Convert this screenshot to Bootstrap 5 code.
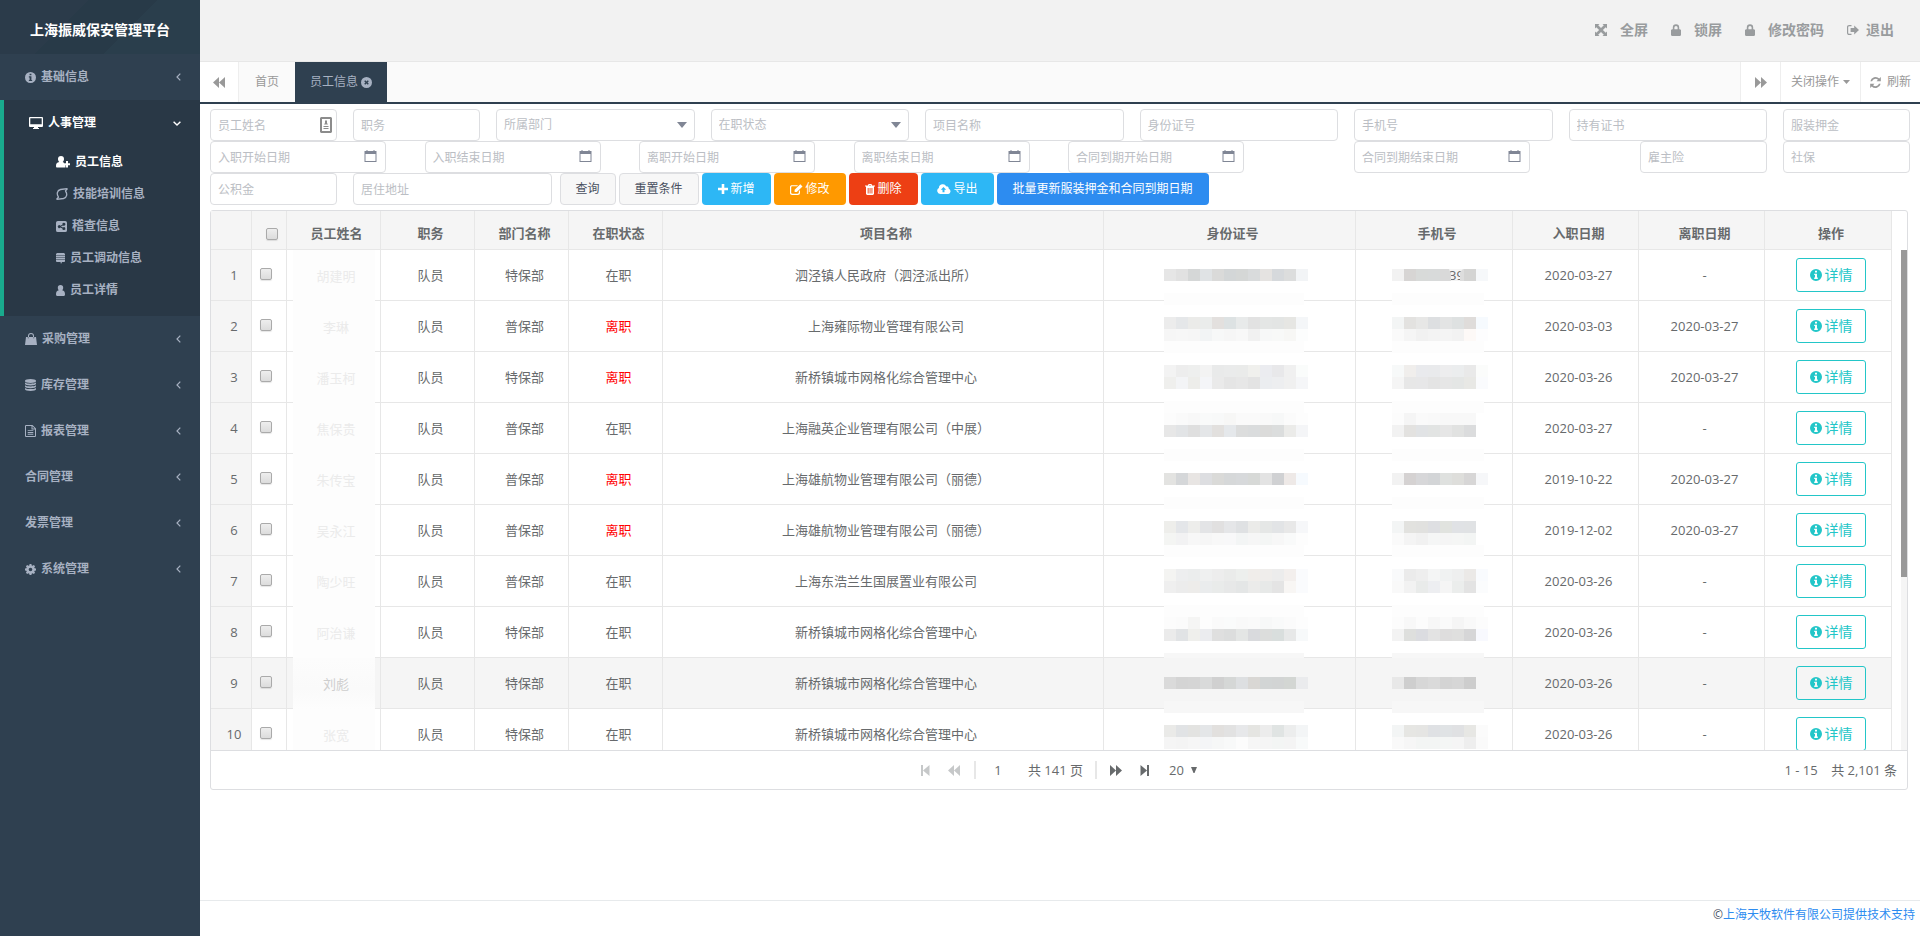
<!DOCTYPE html>
<html lang="zh-CN">
<head>
<meta charset="utf-8">
<meta name="viewport" content="width=device-width, initial-scale=1">
<title>上海振威保安管理平台</title>
<link href="https://cdn.jsdelivr.net/npm/bootstrap@5.3.0/dist/css/bootstrap.min.css" rel="stylesheet">
<style>
  body { font-family: "Open Sans", "Noto Sans CJK SC", sans-serif; font-size: 12px; line-height: 18px; color: #495060; background: #fff; }
  a { text-decoration: none; color: inherit; }
  svg { fill: currentColor; flex: none; }

  /* sidebar */
  .side { width: 200px; flex: none; background: #2f4050; color: #a7b1c2; font-weight: 600; }
  .brand { height: 54px; padding-top: 6px; font-size: 14px; color: #fff; background: linear-gradient(135deg, #2b3b4a 0 35%, #283a48 35% 62%, #2a3e4c 62%); }
  .side-link { height: 46px; padding: 0 19px 0 25px; }
  .side-link svg.ico { margin-right: 5px; }
  .side-open { background: #293846; border-left: 4px solid #19aa8d; padding-bottom: 10px; }
  .side-open .side-link { color: #fff; }
  .sub-link { height: 32px; padding-left: 52px; }
  .sub-link svg { margin-right: 5px; }
  .sub-link.on { color: #fff; }

  /* top bar and tabs */
  .topbar { height: 61px; background: #f2f2f2; color: #999c9e; font-size: 14px; font-weight: 600; padding: 0 26px 1px 0; gap: 23px; }
  .topbar svg { margin-right: 13px; }
  .topbar a:last-child svg { margin-right: 7px; }
  .tabs { height: 43px; background: #fafafa; border-top: 1px solid #e7e7e7; border-bottom: 2px solid #2f4050; color: #999; }
  .tab-btn { background: #fff; border: 0; color: #999; height: 40px; width: 40px; }
  .tab-btn.r { border-right: 1px solid #eee; width: 39px; }
  .tab-btn.l { border-left: 1px solid #eee; }
  .tab-page { height: 40px; padding: 0 16px; }
  .tab-page.on { background: #2f4050; color: #a7b1c2; padding: 0 15px; gap: 3px; }

  /* search form: 24 columns */
  .filters { display: grid; grid-template-columns: repeat(24, minmax(0, 1fr)); padding: 5px 2px 0; }
  .cell { height: 32px; padding: 0 8px; }
  .w2 { grid-column: span 2; } .w3 { grid-column: span 3; } .w4 { grid-column: span 4; }
  .fld { height: 32px; border: 1px solid #dddee1; border-radius: 4px; padding: 2px 7px; font-size: 12px; line-height: 18px; color: #495060; width: 100%; background-color: #fff; display: block; }
  .fld::placeholder { color: #bbbec4; opacity: 1; }
  select.fld { appearance: none; color: #bbbec4; background: #fff url("data:image/svg+xml,%3Csvg xmlns='http://www.w3.org/2000/svg' width='10' height='6'%3E%3Cpath d='M0 0h10L5 6z' fill='%23808695'/%3E%3C/svg%3E") no-repeat right 7px top 12px; }
  .date { width: 176px; max-width: 100%; }
  .fld-ico { right: 9px; top: 9px; color: #808695; }
  .b { height: 32px; border-radius: 4px; font-size: 12px; line-height: 18px; padding: 0 15px; border: 1px solid transparent; color: #fff; display: inline-flex; align-items: center; justify-content: center; gap: 3px; white-space: nowrap; }
  .b-plain { background: #f7f7f7; border-color: #dddee1; color: #495060; }
  .b-sky { background: #2db7f5; } .b-orange { background: #f90; } .b-red { background: #ed3f14; } .b-blue { background: #2d8cf0; }

  /* data grid */
  .gridbox { margin: 5px 12px 0 10px; border: 1px solid #dddee1; border-radius: 3px; color: #676a6c; font-size: 13px; }
  .view { height: 539px; overflow: hidden; }
  .pane { min-width: 0; }
  .roster { table-layout: fixed; border-collapse: separate; border-spacing: 0; color: inherit; line-height: 20px; }
  .roster > :not(caption) > tr > * { padding: 0 0 0 6px; border: 0 solid #e7e7e7; border-width: 0 1px 1px 0; height: 51px; position: relative; box-shadow: none; color: #676a6c; white-space: nowrap; }
  .roster > thead > tr > th { height: 39px; background: #f5f5f5; font-weight: 600; padding-top: 5px; vertical-align: middle; }
  .roster > tbody > tr > td:first-child, .roster > tbody > tr.hov > td { background: #f5f5f5; }
  .roster > tbody > tr > td.ck { padding: 0 6px 6px 0; }
  .tick { appearance: none; width: 12px; height: 12px; border: 1px solid #aaa; border-radius: 2px; background: linear-gradient(#eee, #dcdcdc); margin: 0; vertical-align: middle; box-shadow: 0 1px 1px rgba(0,0,0,.1); }
  .smudge { position: absolute; left: 6px; right: 5px; top: 0; bottom: -1px; background: #fdfdfd; padding-left: 4px; color: #ebebeb; }
  .hov .smudge { background: linear-gradient(#fcfcfc, #fafafa 60%, #fdfdfd); color: #cecece; }
  .mosaic { position: absolute; left: 0; top: 0; overflow: visible; }
  .off { color: #f00; }
  .more { height: 34px; width: 70px; border: 1px solid #23c6c8; border-radius: 3px; color: #23c6c8; background: transparent; font-size: 14px; padding: 0; display: inline-flex; align-items: center; justify-content: center; gap: 3px; vertical-align: middle; }
  .rail { width: 6px; flex: none; margin: 39px 0 0 9px; background: #f5f5f5; }
  .thumb { background: #999; }
  .pager { height: 39px; border-top: 1px solid #dddee1; padding: 0 10px; line-height: 20px; }
  .pager button { border: 0; background: none; padding: 0; color: #676a6c; display: flex; }
  .pager button:disabled { color: #c6c8c9; }
  .pager .bar { width: 2px; height: 18px; background: #e7e7e7; }
  .pg-no { width: 36px; border: 0; padding: 0; text-align: center; color: #676a6c; }
  .pg-size { appearance: none; border: 0; background: none; padding: 0; color: #676a6c; width: 18px; }
  .foot { border-top: 1px solid #e7eaec; height: 36px; padding: 5px 5px 0 0; }
  .foot a { color: #2d8cf0; }
</style>
</head>
<body>
<svg class="d-none" xmlns="http://www.w3.org/2000/svg">
  <symbol id="i-info" viewBox="0 0 12 12"><path fill-rule="evenodd" d="M6 0a6 6 0 1 1 0 12A6 6 0 0 1 6 0zM5 1.8v1.7h2V1.8zM4.2 4.7v1.2H5v2.7h-.8v1.3h3.6V8.600H7V4.700z"/></symbol>
  <symbol id="i-desktop" viewBox="0 0 14 12"><path fill-rule="evenodd" d="M1 0h12a1 1 0 0 1 1 1v8a1 1 0 0 1-1 1H9v1h1v1H4v-1h1v-1H1a1 1 0 0 1-1-1V1a1 1 0 0 1 1-1zm.3 1.200v6h11.400v-6z"/></symbol>
  <symbol id="i-userplus" viewBox="0 0 14 12"><path d="M5 0a3 3 0 0 1 3 3c0 1.300-.6 2.500-1.300 3.100L8 6.800V9h1.500v2.500H1.200C.4 11.500 0 11 0 10c0-2.200.8-3.300 3.300-3.900C2.600 5.500 2 4.300 2 3a3 3 0 0 1 3-3zM10 5h2v2.200h2v2h-2v2.300h-2V9.200H8v-2h2z"/></symbol>
  <symbol id="i-train" viewBox="0 0 12 12"><path fill="none" stroke="currentColor" stroke-width="1.300" d="M11.500.6 4.500 1.500C.8 2.500.5 6.500 2.600 9M.5 11.400l7-.9C11.200 9.500 11.500 5.500 9.400 3M9.200 3.200 11.500.6M2.800 8.800.5 11.400"/></symbol>
  <symbol id="i-share" viewBox="0 0 12 12"><path fill-rule="evenodd" d="M2 0h8a2 2 0 0 1 2 2v8a2 2 0 0 1-2 2H2a2 2 0 0 1-2-2V2a2 2 0 0 1 2-2zm6.500 2A1.600 1.600 0 0 0 7 4L4.800 5.100a1.600 1.600 0 1 0 0 2L7 8.100a1.600 1.600 0 1 0 .6-1.100L5.300 6l2.300-1.200A1.600 1.600 0 1 0 8.500 2z"/></symbol>
  <symbol id="i-stack" viewBox="0 0 9 11"><path d="M1 0h7l1 1v1H0V1zM0 2.500h9v1.700H0zM0 4.800h9v1.700H0zM0 7h9v1.200L8.500 9H6L5 11 4.500 9h-4L0 8z"/></symbol>
  <symbol id="i-user" viewBox="0 0 9 11"><path d="M4.500 0a2.700 2.700 0 0 1 2.700 2.700c0 1-.4 2-1 2.500C8.200 5.600 9 7 9 9.200 9 10.400 8.500 11 7.500 11h-6C.5 11 0 10.400 0 9.200 0 7 .8 5.600 2.800 5.200c-.6-.5-1-1.500-1-2.500A2.700 2.700 0 0 1 4.500 0z"/></symbol>
  <symbol id="i-bag" viewBox="0 0 12 12"><path d="M1 4h1.800v1.300h1V4h4.400v1.300h1V4H11l1 8H0zM3 4.500V3a3 3 0 0 1 6 0v1.500H8V3a2 2 0 0 0-4 0v1.500z"/></symbol>
  <symbol id="i-db" viewBox="0 0 11 12"><path d="M5.500 0C8.500 0 11 .8 11 1.700v.6C11 3.200 8.500 4 5.500 4S0 3.200 0 2.300v-.6C0 .8 2.500 0 5.500 0zM0 3.600C1 4.400 3 4.800 5.500 4.800S10 4.400 11 3.600v1.200c0 .9-2.500 1.700-5.500 1.700S0 5.700 0 4.800zM0 6.200c1 .8 3 1.200 5.500 1.200S10 7 11 6.200v1.300c0 .9-2.500 1.700-5.500 1.700S0 8.400 0 7.500zM0 8.900c1 .8 3 1.200 5.500 1.200S10 9.700 11 8.900v1.400c0 .9-2.500 1.700-5.500 1.700S0 11.200 0 10.300z"/></symbol>
  <symbol id="i-file" viewBox="0 0 11 12"><path fill-rule="evenodd" d="M.8 0H7.500L11 3.500V11.200l-.8.8H.8l-.8-.8V.8zM1 1v10h9V4.500H6.500V1zm6.500.3v2.200h2.200zM2.700 5.200h5.600v.9H2.700zM2.700 7h5.600v.9H2.700zm0 1.800h5.600v.9H2.700z"/></symbol>
  <symbol id="i-gear" viewBox="0 0 12 12"><path fill-rule="evenodd" d="M5 0h2l.3 1.600 1 .4 1.300-1L11 2.400l-.9 1.300.4 1L12 5v2l-1.500.3-.4 1 .9 1.300L9.600 11l-1.300-.9-1 .4L7 12H5l-.3-1.500-1-.4-1.300.9L1 9.600l.9-1.300-.4-1L0 7V5l1.500-.3.400-1L1 2.400 2.400 1l1.300 1 1-.4zm1 4a2 2 0 1 0 0 4 2 2 0 0 0 0-4z"/></symbol>
  <symbol id="i-left" viewBox="0 0 5 8"><path fill="none" stroke="currentColor" stroke-width="1.200" d="M4.300.6 1 4l3.300 3.400"/></symbol>
  <symbol id="i-down" viewBox="0 0 8 5"><path fill="none" stroke="currentColor" stroke-width="1.400" d="M.6.7 4 4 7.400.7"/></symbol>
  <symbol id="i-full" viewBox="0 0 12 12"><path d="M0 0h4.500L3.200 1.300 6 4.100l2.800-2.800L7.500 0H12v4.500l-1.300-1.300L7.900 6l2.800 2.800L12 7.500V12H7.500l1.300-1.300L6 7.900l-2.800 2.800L4.500 12H0V7.500l1.300 1.300L4.100 6 1.300 3.200 0 4.500z"/></symbol>
  <symbol id="i-lock" viewBox="0 0 10 12"><path d="M1 5.200h.8V3.500a3.200 3.200 0 0 1 6.400 0v1.700H9l1 .7v5.300l-1 .8H1l-1-.8V5.900zm2.400 0h3.200V3.500a1.600 1.600 0 0 0-3.200 0z"/></symbol>
  <symbol id="i-exit" viewBox="0 0 12 12"><path d="M4.500 1v1.200H2.300C1.600 2.200 1.200 2.600 1.200 3.300v5.400c0 .7.4 1.100 1.100 1.100h2.200V11H2.300C.8 11 0 10.200 0 8.700V3.300C0 1.800.8 1 2.300 1zM7.200 1.500 12 6l-4.800 4.500V8H3.600V4h3.600z"/></symbol>
  <symbol id="i-back" viewBox="0 0 12 11"><path d="M6 0v11L0 5.500zM12 0v11L6 5.500z"/></symbol>
  <symbol id="i-fwd" viewBox="0 0 12 11"><path d="M0 0v11l6-5.500zM6 0v11l6-5.500z"/></symbol>
  <symbol id="i-first" viewBox="0 0 9 11"><path d="M0 0h2v11H0zM8.500 0v11L2 5.500z"/></symbol>
  <symbol id="i-last" viewBox="0 0 9 11"><path d="M7 0h2v11H7zM.5 0v11L7 5.500z"/></symbol>
  <symbol id="i-close" viewBox="0 0 12 12"><path fill-rule="evenodd" d="M6 0a6 6 0 1 1 0 12A6 6 0 0 1 6 0zM3.500 4.600 4.900 6 3.500 7.400l1.100 1.100L6 7.100l1.400 1.400 1.100-1.100L7.100 6l1.400-1.400-1.100-1.100L6 4.900 4.600 3.500z"/></symbol>
  <symbol id="i-refresh" viewBox="0 0 12 12"><path d="M11.800 0v4.700H7.100l1.600-1.600A3.900 3.900 0 0 0 2.300 4.700H.4A5.800 5.800 0 0 1 10.100 1.700zM.2 12V7.300h4.700L3.300 8.900a3.900 3.900 0 0 0 6.400-1.600h1.900A5.800 5.800 0 0 1 1.900 10.300z"/></symbol>
  <symbol id="i-plus" viewBox="0 0 10 10"><path d="M3.700 0h2.600v3.700H10v2.600H6.300V10H3.700V6.300H0V3.700h3.700z"/></symbol>
  <symbol id="i-edit" viewBox="0 0 13 11"><path d="M10.300.2 12.500 2.400 6.800 8H4.600V5.800zM8 1.200 7 2.200H2.400c-.8 0-1.200.4-1.200 1.200v5.200c0 .8.4 1.200 1.200 1.200h5.200c.8 0 1.200-.4 1.200-1.200V7.300l1.200-1.200v2.700c0 1.400-.8 2.200-2.200 2.200H2.200C.8 11 0 10.200 0 8.800V3.200c0-1.400.8-2 2.200-2z"/></symbol>
  <symbol id="i-trash" viewBox="0 0 10 11"><path fill-rule="evenodd" d="M3 1.500 3.500 0h3L7 1.500h3v1H9V10l-1 1H2l-1-1V2.500H0v-1zm1 0h2L5.800.9H4.200zM2.700 4v5.500h.9V4zm1.900 0v5.500h.9V4zm1.900 0v5.500h.9V4z"/></symbol>
  <symbol id="i-cloud" viewBox="0 0 14 10"><path fill-rule="evenodd" d="M3.200 10A3.200 3.200 0 0 1 1.900 4 3.900 3.900 0 0 1 9.300 2.400a2 2 0 0 1 2.400 2.400A2.700 2.700 0 0 1 11.300 10zM6.500 3 3.800 5.700h1.700v2.500h2V5.700h1.700z"/></symbol>
  <symbol id="i-cal" viewBox="0 0 12 12"><path fill-rule="evenodd" d="M0 1h2V0h1v1h6V0h1v1h2v11H0zM1 4v7h10V4z"/></symbol>
  <symbol id="i-card" viewBox="0 0 12 16"><path fill-rule="evenodd" d="M1 0h10l1 1v14l-1 1H1l-1-1V1zm1 2v12h8V2z"/><path d="M5 3.500h2V6l1 1.500H4L5 6zM3.500 9h5v1h-5zM3.500 11h5v1h-5z"/></symbol>
</svg>

<div class="d-flex min-vh-100">
  <nav class="side">
    <div class="brand d-flex align-items-center justify-content-center">上海振威保安管理平台</div>
    <a href="#" class="side-link d-flex align-items-center"><svg class="ico" width="11" height="11"><use href="#i-info"/></svg>基础信息<svg class="ms-auto" width="5" height="8"><use href="#i-left"/></svg></a>
    <div class="side-open">
      <a href="#" class="side-link d-flex align-items-center"><svg class="ico" width="14" height="12"><use href="#i-desktop"/></svg>人事管理<svg class="ms-auto" width="8" height="5"><use href="#i-down"/></svg></a>
      <a href="#" class="sub-link on d-flex align-items-center"><svg width="14" height="12"><use href="#i-userplus"/></svg>员工信息</a>
      <a href="#" class="sub-link d-flex align-items-center"><svg width="12" height="12"><use href="#i-train"/></svg>技能培训信息</a>
      <a href="#" class="sub-link d-flex align-items-center"><svg width="11" height="11"><use href="#i-share"/></svg>稽查信息</a>
      <a href="#" class="sub-link d-flex align-items-center"><svg width="9" height="11"><use href="#i-stack"/></svg>员工调动信息</a>
      <a href="#" class="sub-link d-flex align-items-center"><svg width="9" height="11"><use href="#i-user"/></svg>员工详情</a>
    </div>
    <a href="#" class="side-link d-flex align-items-center"><svg class="ico" width="12" height="12"><use href="#i-bag"/></svg>采购管理<svg class="ms-auto" width="5" height="8"><use href="#i-left"/></svg></a>
    <a href="#" class="side-link d-flex align-items-center"><svg class="ico" width="11" height="12"><use href="#i-db"/></svg>库存管理<svg class="ms-auto" width="5" height="8"><use href="#i-left"/></svg></a>
    <a href="#" class="side-link d-flex align-items-center"><svg class="ico" width="11" height="12"><use href="#i-file"/></svg>报表管理<svg class="ms-auto" width="5" height="8"><use href="#i-left"/></svg></a>
    <a href="#" class="side-link d-flex align-items-center">合同管理<svg class="ms-auto" width="5" height="8"><use href="#i-left"/></svg></a>
    <a href="#" class="side-link d-flex align-items-center">发票管理<svg class="ms-auto" width="5" height="8"><use href="#i-left"/></svg></a>
    <a href="#" class="side-link d-flex align-items-center"><svg class="ico" width="11" height="11"><use href="#i-gear"/></svg>系统管理<svg class="ms-auto" width="5" height="8"><use href="#i-left"/></svg></a>
  </nav>

  <div class="pane d-flex flex-column flex-grow-1">
    <header class="topbar d-flex align-items-center justify-content-end">
      <a href="#" class="d-flex align-items-center"><svg width="12" height="12"><use href="#i-full"/></svg>全屏</a>
      <a href="#" class="d-flex align-items-center"><svg width="10" height="12"><use href="#i-lock"/></svg>锁屏</a>
      <a href="#" class="d-flex align-items-center"><svg width="10" height="12"><use href="#i-lock"/></svg>修改密码</a>
      <a href="#" class="d-flex align-items-center"><svg width="12" height="12"><use href="#i-exit"/></svg>退出</a>
    </header>
    <div class="tabs d-flex">
      <button class="tab-btn r px-0 d-flex align-items-center justify-content-center" aria-label="向左"><svg width="12" height="11"><use href="#i-back"/></svg></button>
      <a href="#" class="tab-page d-flex align-items-center">首页</a>
      <a href="#" class="tab-page on d-flex align-items-center">员工信息<svg width="11" height="11"><use href="#i-close"/></svg></a>
      <button class="tab-btn l ms-auto px-0 d-flex align-items-center justify-content-center" aria-label="向右"><svg width="12" height="11"><use href="#i-fwd"/></svg></button>
      <button class="tab-btn l d-flex align-items-center px-2 justify-content-center gap-1" style="width:80px">关闭操作<svg width="7" height="4" viewBox="0 0 7 4"><path d="M0 0h7L3.500 4z"/></svg></button>
      <button class="tab-btn l d-flex align-items-center px-2 justify-content-center" style="width:60px;gap:6px"><svg width="11" height="11"><use href="#i-refresh"/></svg><span class="text-nowrap">刷新</span></button>
    </div>

    <main class="flex-grow-1">
      <form class="filters" onsubmit="return false">
        <div class="cell w2 position-relative"><input class="fld" placeholder="员工姓名" aria-label="员工姓名"><svg class="position-absolute" style="right:13px;top:8px;color:#8c8c8c" width="12" height="16"><use href="#i-card"/></svg></div>
        <div class="cell w2"><input class="fld" placeholder="职务" aria-label="职务"></div>
        <div class="cell w3"><select class="fld" aria-label="所属部门"><option>所属部门</option></select></div>
        <div class="cell w3"><select class="fld" aria-label="在职状态"><option>在职状态</option></select></div>
        <div class="cell w3"><input class="fld" placeholder="项目名称" aria-label="项目名称"></div>
        <div class="cell w3"><input class="fld" placeholder="身份证号" aria-label="身份证号"></div>
        <div class="cell w3"><input class="fld" placeholder="手机号" aria-label="手机号"></div>
        <div class="cell w3"><input class="fld" placeholder="持有证书" aria-label="持有证书"></div>
        <div class="cell w2"><input class="fld" placeholder="服装押金" aria-label="服装押金"></div>

        <div class="cell w3"><div class="date position-relative"><input class="fld" placeholder="入职开始日期" aria-label="入职开始日期"><svg class="fld-ico position-absolute" width="13" height="12"><use href="#i-cal"/></svg></div></div>
        <div class="cell w3"><div class="date position-relative"><input class="fld" placeholder="入职结束日期" aria-label="入职结束日期"><svg class="fld-ico position-absolute" width="13" height="12"><use href="#i-cal"/></svg></div></div>
        <div class="cell w3"><div class="date position-relative"><input class="fld" placeholder="离职开始日期" aria-label="离职开始日期"><svg class="fld-ico position-absolute" width="13" height="12"><use href="#i-cal"/></svg></div></div>
        <div class="cell w3"><div class="date position-relative"><input class="fld" placeholder="离职结束日期" aria-label="离职结束日期"><svg class="fld-ico position-absolute" width="13" height="12"><use href="#i-cal"/></svg></div></div>
        <div class="cell w4"><div class="date position-relative"><input class="fld" placeholder="合同到期开始日期" aria-label="合同到期开始日期"><svg class="fld-ico position-absolute" width="13" height="12"><use href="#i-cal"/></svg></div></div>
        <div class="cell w4"><div class="date position-relative"><input class="fld" placeholder="合同到期结束日期" aria-label="合同到期结束日期"><svg class="fld-ico position-absolute" width="13" height="12"><use href="#i-cal"/></svg></div></div>
        <div class="cell w2"><input class="fld" placeholder="雇主险" aria-label="雇主险"></div>
        <div class="cell w2"><input class="fld" placeholder="社保" aria-label="社保"></div>

        <div class="cell w2"><input class="fld" placeholder="公积金" aria-label="公积金"></div>
        <div class="cell w3"><input class="fld" placeholder="居住地址" aria-label="居住地址"></div>
        <div class="d-flex" style="grid-column:span 19;gap:3px">
          <button class="b b-plain">查询</button>
          <button class="b b-plain">重置条件</button>
          <button class="b b-sky"><svg width="10" height="10"><use href="#i-plus"/></svg>新增</button>
          <button class="b b-orange"><svg width="13" height="11"><use href="#i-edit"/></svg>修改</button>
          <button class="b b-red"><svg width="10" height="11"><use href="#i-trash"/></svg>删除</button>
          <button class="b b-sky"><svg width="14" height="10"><use href="#i-cloud"/></svg>导出</button>
          <button class="b b-blue">批量更新服装押金和合同到期日期</button>
        </div>
      </form>

      <section class="gridbox">
        <div class="view d-flex">
          <div class="pane flex-grow-1">
            <table class="table roster mb-0 align-middle text-center">
              <colgroup><col style="width:41px"><col style="width:35px"><col style="width:94px"><col style="width:94px"><col style="width:94px"><col style="width:94px"><col><col style="width:252px"><col style="width:157px"><col style="width:126px"><col style="width:126px"><col style="width:127px"></colgroup>
              <thead><tr><th></th><th><input type="checkbox" class="tick" aria-label="全选"></th><th>员工姓名</th><th>职务</th><th>部门名称</th><th>在职状态</th><th>项目名称</th><th>身份证号</th><th>手机号</th><th>入职日期</th><th>离职日期</th><th>操作</th></tr></thead>
              <tbody id="rows"></tbody>
            </table>
          </div>
          <div class="rail"><div class="thumb" style="height:65.3%"></div></div>
        </div>
        <div class="pager d-grid align-items-center" style="grid-template-columns:1fr auto 1fr">
          <span></span>
          <div class="d-flex align-items-center">
            <button disabled aria-label="首页"><svg width="9" height="11"><use href="#i-first"/></svg></button>
            <button disabled aria-label="上一页" style="margin:0 14px 0 18px"><svg width="12" height="11"><use href="#i-back"/></svg></button>
            <span class="bar"></span>
            <input class="pg-no ms-1" value="1" aria-label="页码">
            <span class="ms-2 ps-1">共 141 页</span>
            <span class="bar" style="margin:0 13px 0 12px"></span>
            <button aria-label="下一页"><svg width="12" height="11"><use href="#i-fwd"/></svg></button>
            <button aria-label="末页" style="margin:0 20px 0 18px"><svg width="9" height="11"><use href="#i-last"/></svg></button>
            <select class="pg-size" aria-label="每页条数"><option>20</option></select>
            <svg class="ms-1" width="6" height="6" viewBox="0 0 6 6"><path d="M0 0h6L3.500 6h-1z"/></svg>
          </div>
          <span class="text-end" style="white-space:pre">1 - 15    共 2,101 条</span>
        </div>
      </section>
    </main>

    <footer class="foot text-end">©<a href="#">上海天牧软件有限公司提供技术支持</a></footer>
  </div>
</div>

<script src="https://cdn.jsdelivr.net/npm/bootstrap@5.3.0/dist/js/bootstrap.bundle.min.js"></script>
<script>
  // name, department, state, project, joined, left, mask offset, id masks, phone masks, smear offset
  var data = [
    ['胡建明','特保部','在职','泗泾镇人民政府（泗泾派出所）','2020-03-27','-',19,['e6e6e6 e1e1e1 d5d7d7 e0e3e5 dadad9 d3d6d7 d5d7d6 d9dbdc e5e3e1 d6d9dc dcdddd f2f4f6'],['f2f2f2 d7d5d4 d8dad9 d8dada d9d9d9 dddddd d4d4d3 f6f8fa'],43],
    ['李琳','普保部','离职','上海雍际物业管理有限公司','2020-03-03','2020-03-27',16,['ececec e5e7e9 ebebe9 eaeceb e3e0de dde2e3 e8eaea e2e2e2 e4e6e5 e3e5e4 e6e6e3 f4f6f8','f6f6f6 f7f7f7 f6f6f6 f2f4f5 f7f8f8 f6f6f6 f8f8f8 f1f1f1 f7f8f8 f8f9f8 f7f7f5 fcfdfd'],['f3f5f5 e3e2e0 e7e7e6 dddfe1 e3e4e4 dee1e1 dfdcda f6fafe','fafafa f5f5f5 f1f1f1 f3f3f3 f4f4f4 f2f2f2 fdf9f7 fdfdfe'],40],
    ['潘玉柯','特保部','离职','新桥镇城市网格化综合管理中心','2020-03-26','2020-03-27',13,['f3f3f3 ededed eeefee f3f3f3 e9eaea eaebeb eaebea f0f0ed ebecf0 e8e8ea f0f0f0 fafcfb','efefed f3f4f6 ededea f4f5f8 eaeaea e5e5e5 e7e7e7 e3e3e3 ebedf0 edeef0 f0f0f0 f5f6f8'],['f7f9f9 f0eeec e9eaed e9eaec ededee ebedee e9e9e9 fbfcfb','f5f5f5 e7e7e7 e7e7e8 e4e4e4 e6e6e6 e4e6e5 e8e8e5 fafbfd'],49],
    ['焦保贵','普保部','在职','上海融英企业管理有限公司（中展）','2020-03-27','-',10,['fcfcfc fafafa f8f8f8 f9fafa f8f9f9 f7f7f6 fafafa fafafa f9f9f9 f7f8f8 fbfbfb fdfdfd','e7e7e7 e2e4e6 dfdfdf e4e6e8 e2e0de e5e8eb dcdddd dadcdd dbdbda dbdddd ebebe9 f4f5f7'],['fcfcfc f5f5f5 fafafa f9f9f9 f8f8f8 f8f8f8 f8f8f8 fff','f2f2f2 e3e2e0 e1e3e5 e2e4e3 e6e6e6 e1e2e1 dbdcdd fff'],46],
    ['朱传宝','普保部','离职','上海雄航物业管理有限公司（丽德）','2019-10-22','2020-03-27',19,['e3e3e1 d5d7d9 e8e5e3 dddee1 dadad8 d6d8d9 d7d9db d7d9d7 e3e3e3 d0d1d3 eee9e7 f6fafe'],['f2f2f2 d5d2d2 d7d7d9 d3d5d7 dfe1df dededb d7d6d6 f6f7f9'],43],
    ['吴永江','普保部','离职','上海雄航物业管理有限公司（丽德）','2019-12-02','2020-03-27',16,['eeeeeb e4e6e9 ededeb e3e4e6 e1e0e0 e5e6e8 dfe1e3 ebebe9 e5e7e6 e2e4e6 e8e8e8 f6f7f9','f4f5f3 f2f2f3 f7f7f7 f6f6f6 f8f8f8 f8f8f9 f3f5f5 f6f6f6 f4f6f5 f7f7f7 f9fafa fdfdfd'],['f3f5f5 e2e2df e1e1df dedfe2 e1e3df e0e2e5 e0e2e4 fff','fafafa f4f4f4 f1f1f1 f5f6f6 f5f5f5 f5f6f5 f3f5f4 fff'],40],
    ['陶少旺','普保部','在职','上海东浩兰生国展置业有限公司','2020-03-26','-',13,['f4f4f2 edeeef ebeded eff0f0 ededed eaebea edefed f0edea efedeb ececec f3efed fafbfd','efefef ececec edecea eaeced e9ebea e7e8e8 e4e6e6 ebebea e7e9e8 e4e4e4 f8f6f4 fafbfd'],['f9fafb ebebeb eeeeee f4f5f5 f0f2f2 eeefef ebe9e7 f9fbfe','f9f9f9 f2f2f2 e9ebea edeef1 f5f5f5 ebedec e3e3e3 fbfcfd'],49],
    ['阿治谦','特保部','在职','新桥镇城市网格化综合管理中心','2020-03-26','-',10,['fcfcfc fbfbfb f5f5f4 fdfdfd fafafa fafbfb f9f9f9 fafafa f7f8f8 f9fafa fbfbfb fdfdfd','ebebeb e1e3e5 efefec ebecef dfdfdf dcdddd e4e6e5 d9dadd dcdddc d9dedd e7e8e8 f7f9fa'],['fcfcfc f8f8f8 fcfcfc f7f7f7 fafafa f5f5f5 f9f9f9 fcfcfc','f3f3f3 dedfdd dbdce0 e3e3e3 dedddd dfdfde d6d6d7 f8f9fe'],46],
    ['刘彪','特保部','在职','新桥镇城市网格化综合管理中心','2020-03-26','-',19,['dadada d4d4d4 d5d5d5 d9dada d0d0d0 d5d7d6 dddfe1 d9d7d4 d2d5d5 d2d4d4 d3d6d3 eaebed'],['e8e8e8 cecece d7d7d7 dadada d4d4d4 d6d6d6 cdcdcd f5f5f5'],43],
    ['张宽','特保部','在职','新桥镇城市网格化综合管理中心','2020-03-26','-',16,['eaeae8 e1e3e5 e3e3e1 e4e6e8 e2e0de e2e2e2 e7e8ea e5e5e2 ececec e0e4e3 eceded f3f5f6','f5f5f5 f4f4f4 f6f6f6 f4f5f7 f6f7f7 f8f9f9 fcfcfc f6f6f6 f5f5f5 f3f5f4 f4f4f4 f8fafa'],['f3f5f5 e6e6e3 e5e5e3 dfe1e4 e0e3e5 e0e1e3 e7e7e4 fbfbfb','f9f9f9 f6f6f6 f3f5f4 f3f5f4 f4f6f5 f5f5f5 eeeeee fafafa'],99]
  ];
  // pixelated mask drawn over a private value, in 12px squares
  function mosaic(lines, x, y, extra, smear, shade) {
    var s = '<svg class="mosaic" width="144" height="50">';
    if (smear < 90) s += '<rect x="' + x + '" y="' + smear + '" width="' + (lines[0].split(' ').length * 12 - 4) + '" height="12" fill="' + shade + '"/>';
    lines.forEach(function (line, r) {
      line.split(' ').forEach(function (c, i) {
        if (c === 'fff') return;
        s += '<rect x="' + (x + i * 12) + '" y="' + (y + r * 12) + '" width="12" height="12" fill="#' + c + '"/>';
      });
    });
    return s + extra + '</svg>';
  }
  document.getElementById('rows').innerHTML = data.map(function (d, i) {
    var shade = i === 7 || i === 8 ? '#f7f7f7' : '#fdfdfd';
    var peek = i === 0 ? '<clipPath id="pk"><path d="M93 19h14l-3 3v9h-9v-7z"/></clipPath><g clip-path="url(#pk)"><path fill="#f4f4f4" d="M93 19h14v12H93z"/><text x="93" y="30" font-size="13" fill="#676a6c">39</text></g>' : '';
    return '<tr' + (i === 8 ? ' class="hov"' : '') + '><td>' + (i + 1) + '</td>' +
      '<td class="ck"><input type="checkbox" class="tick" aria-label="选择第' + (i + 1) + '行"></td>' +
      '<td><span class="smudge d-flex align-items-center justify-content-center">' + d[0] + '</span></td>' +
      '<td>队员</td><td>' + d[1] + '</td><td><span' + (d[2] === '离职' ? ' class="off"' : '') + '>' + d[2] + '</span></td><td>' + d[3] + '</td>' +
      '<td>' + mosaic(d[7], 60, d[6], '', d[9], shade) + '</td><td>' + mosaic(d[8], 36, d[6], peek, d[9], shade) + '</td>' +
      '<td>' + d[4] + '</td><td>' + d[5] + '</td>' +
      '<td><button class="more"><svg width="12" height="12"><use href="#i-info"/></svg>详情</button></td></tr>';
  }).join('');
</script>
</body>
</html>
